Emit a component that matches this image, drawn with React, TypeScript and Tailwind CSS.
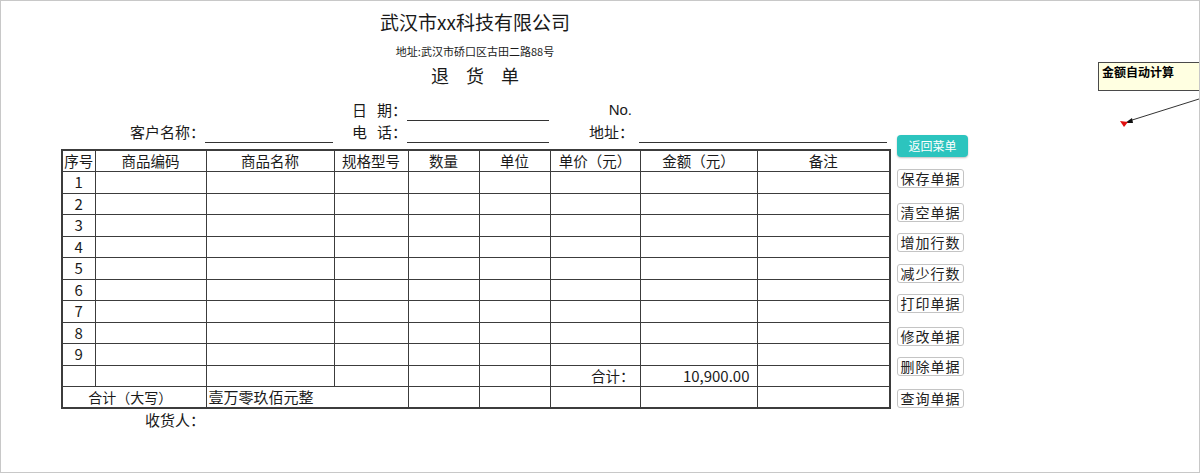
import React from 'react';

const COLS = [33, 111, 128, 74, 71, 71, 90, 117, 133];
const HEADERS = ['序号', '商品编码', '商品名称', '规格型号', '数量', '单位', '单价（元）', '金额（元）', '备注'];

const BUTTONS = [
  { label: '保存单据', mt: 'mt-[12px]' },
  { label: '清空单据', mt: 'mt-[15px]' },
  { label: '增加行数', mt: 'mt-[11px]' },
  { label: '减少行数', mt: 'mt-[12px]' },
  { label: '打印单据', mt: 'mt-[11px]' },
  { label: '修改单据', mt: 'mt-[14px]' },
  { label: '删除单据', mt: 'mt-[11px]' },
  { label: '查询单据', mt: 'mt-[13px]' },
];

const cell = 'border border-[#3c3c3c] p-0';

export default function App() {
  const rows = [1, 2, 3, 4, 5, 6, 7, 8, 9];

  return (
    <div className="relative w-[1200px] h-[473px] overflow-hidden border border-[#c8c8c8] bg-white font-['Noto_Sans_CJK_SC','Noto_Sans',sans-serif] text-[#1a1a1a]">
      <div className="flex pl-[60px]">
        {/* Form */}
        <div className="w-[828px]">
          <div className="pt-[7px] text-center text-[19px] leading-[28px]">武汉市xx科技有限公司</div>
          <div className="mt-[7px] text-center text-[11px] leading-[16px]">地址:武汉市硚口区古田二路88号</div>
          <div className="mt-[4px] flex justify-center gap-[17px] text-[18px] leading-[24px]">
            <span>退</span>
            <span>货</span>
            <span>单</span>
          </div>

          {/* Info rows */}
          <div className="mt-[12px] grid grid-cols-[33px_111px_128px_74px_71px_71px_90px_117px_133px] text-[15px] leading-[22px]">
            <div className="col-span-3 h-[22px]" />
            <div className="whitespace-nowrap text-right">
              日<span className="ml-[10px]">期：</span>
            </div>
            <div className="col-span-2 border-b border-[#333]" />
            <div className="pr-[7px] text-right font-['Liberation_Sans',sans-serif] text-[15px]">No.</div>
            <div className="col-span-2" />

            <div className="col-span-2 h-[22px] text-right">客户名称：</div>
            <div className="border-b border-[#333]" />
            <div className="whitespace-nowrap text-right">
              电<span className="ml-[10px]">话：</span>
            </div>
            <div className="col-span-2 border-b border-[#333]" />
            <div className="pr-[5px] text-right">地址：</div>
            <div className="col-span-2 mr-[2px] border-b border-[#333]" />
          </div>

          {/* Table */}
          <table className="mt-[6px] w-[828px] table-fixed border-collapse border-2 border-[#3c3c3c] text-[14.5px]">
            <colgroup>
              {COLS.map((w, i) => (
                <col key={i} style={{ width: w }} />
              ))}
            </colgroup>
            <tbody>
              <tr className="h-[21.5px]">
                {HEADERS.map((h) => (
                  <td key={h} className={`${cell} whitespace-nowrap text-center leading-[20px]`}>
                    {h}
                  </td>
                ))}
              </tr>
              {rows.map((n) => (
                <tr key={n} className="h-[21.5px]">
                  <td className={`${cell} text-center text-[15px] leading-[20px]`}>{n}</td>
                  {COLS.slice(1).map((_, i) => (
                    <td key={i} className={cell} />
                  ))}
                </tr>
              ))}
              <tr className="h-[21.5px]">
                {COLS.slice(0, 6).map((_, i) => (
                  <td key={i} className={cell} />
                ))}
                <td className={`${cell} pr-[5px] text-right leading-[20px]`}>合计：</td>
                <td className={`${cell} pr-[7px] text-right text-[15px] leading-[20px]`}>10,900.00</td>
                <td className={cell} />
              </tr>
              <tr className="h-[21.5px]">
                <td colSpan={2} className={`${cell} pr-[8px] text-center text-[14px] leading-[20px]`}>
                  合计（大写）
                </td>
                <td colSpan={2} className={`${cell} pl-[2px] text-left text-[15px] leading-[20px]`}>
                  壹万零玖佰元整
                </td>
                {COLS.slice(4).map((_, i) => (
                  <td key={i} className={cell} />
                ))}
              </tr>
            </tbody>
          </table>

          <div className="grid h-[22px] grid-cols-[144px_684px] text-[15px] leading-[22px]">
            <div className="text-right">收货人：</div>
            <div />
          </div>
        </div>

        {/* Action buttons */}
        <div className="ml-[8px] flex flex-col pt-[134px]">
          <button className="h-[22px] w-[71px] rounded-[4px] bg-[#2cc4be] text-[12px] text-white shadow-[0_1px_2px_rgba(0,0,0,0.25)]">
            返回菜单
          </button>
          {BUTTONS.map((b) => (
            <button
              key={b.label}
              className={`${b.mt} h-[19px] w-[67px] rounded-[3px] border border-[#c4c4c4] bg-white text-[14px] leading-[17px] tracking-[1px] text-[#222]`}
            >
              {b.label}
            </button>
          ))}
        </div>
      </div>

      {/* Comment note */}
      <div className="absolute left-[1097px] top-[61px] h-[29px] w-[120px] border border-[#4a4a4a] bg-[#ffffe1] px-[3px] pt-[1px] text-[12px] font-bold leading-[16px] text-black">
        金额自动计算
      </div>
      <svg className="absolute left-[1110px] top-[90px]" width="90" height="40" viewBox="0 0 90 40">
        <line x1="88" y1="8" x2="18" y2="30" stroke="#333" strokeWidth="1" />
        <polygon points="14,32 21,27 22,32" fill="#111" />
        <polygon points="9,30 17,31 13,36" fill="#e01010" />
      </svg>
    </div>
  );
}
